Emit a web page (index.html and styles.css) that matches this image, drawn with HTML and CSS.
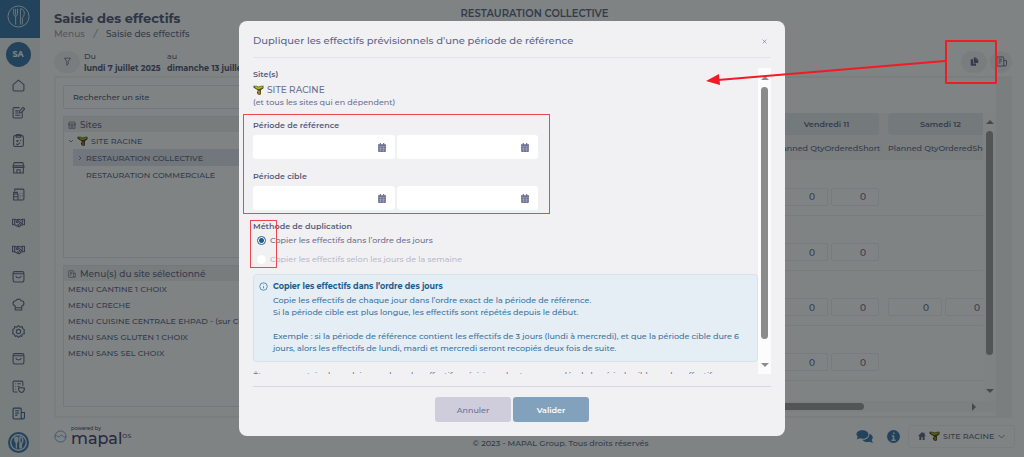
FILE: index.html
```html
<!DOCTYPE html>
<html lang="fr">
<head>
  <meta charset="UTF-8" />
  <meta name="viewport" content="width=device-width, initial-scale=1" />
  <title>Saisie des effectifs</title>
  <link rel="stylesheet" href="styles.css">
</head>
<body>

<!-- icons -->
<svg class="sprite" aria-hidden="true">
  <symbol id="i-cutlery" viewBox="0 0 24 24"><circle cx="12" cy="12" r="11"/><path d="M7 4v5c0 2 1 2.500 2 3v8.500M11 4v5c0 2-1 2.500-2 3M9 4v7M14 20.500V4c3 0 4 2 4 4.500S17 13 16 13v7.500"/></symbol>
  <symbol id="i-home" viewBox="0 0 24 24"><path d="M2 10.500 12 2l10 8.500V20a2 2 0 0 1-2 2H4a2 2 0 0 1-2-2z"/></symbol>
  <symbol id="i-edit" viewBox="0 0 24 24"><path d="M14 3H4a2 2 0 0 0-2 2v15a2 2 0 0 0 2 2h13a2 2 0 0 0 2-2v-8M6 9h6M6 13h5M6 17h9M13 13l1-4 6.500-6.500 3 3L17 12z"/></symbol>
  <symbol id="i-clip" viewBox="0 0 24 24"><rect x="3" y="3" width="18" height="20" rx="3"/><path d="M8 1h8v5H8zM8 12l2 2 2-3M15 12h2M8 18l2 2 5-4"/></symbol>
  <symbol id="i-store" viewBox="0 0 24 24"><path d="M4 3h16l2 6v3H2V9zM3 12v10h18V12M9 22v-6h6v6M2 9h20"/></symbol>
  <symbol id="i-vending" viewBox="0 0 24 24"><path d="M5 6V2h15a2 2 0 0 1 2 2v16a2 2 0 0 1-2 2H3V11h8v11M3 11V8h7v3M3 16h8M15 9v1M19 9v1M15 14v1M19 14v1M15 18v1M5 2v4"/></symbol>
  <symbol id="i-hands" viewBox="0 0 24 24"><path d="M1 6h4l3 1.500L12 6l4 1.500L19 6h4v10h-4l-6 4-3-1-5-3H1zM5 6v10M19 6v10M12 7l-4 4c1 2 3 1 5-1l6 5M10 15l3 3M13 13l3 4"/></symbol>
  <symbol id="i-bag" viewBox="0 0 24 24"><rect x="2" y="3" width="20" height="19" rx="3"/><path d="M2 7h20M7 11c1 5 9 5 10 0"/></symbol>
  <symbol id="i-chef" viewBox="0 0 24 24"><path d="M6 22v-7c-6-2-5-10 1-10 2-4 8-4 10 0 6 0 7 8 1 10v7zM6 18h12"/></symbol>
  <symbol id="i-gear" viewBox="0 0 24 24"><path d="m12 1 3 3 4-1 1 4 3 2-1 3 1 4-4 1-1 4-3-1-3 3-3-3-3 1-2-4-3-1 1-4-1-3 3-2 1-4 4 1z"/><circle cx="12" cy="12" r="4"/></symbol>
  <symbol id="i-shield" viewBox="0 0 24 24"><path d="M10 22H4a2 2 0 0 1-2-2V4a2 2 0 0 1 2-2h14a2 2 0 0 1 2 2v7M6 7h1M10 7h6M6 12h1M10 12h4M6 17h1M12 15l5-1 6 1c0 5-2 7-5 8-4-1-6-4-6-8z"/></symbol>
  <symbol id="i-news" viewBox="0 0 24 24"><path d="M17 22H4a2 2 0 0 1-2-2V4a2 2 0 0 1 2-2h11a2 2 0 0 1 2 2zM17 10h6v9c0 4-6 4-6 0M6 7h7M6 11h7M6 15h4"/></symbol>
  <symbol id="i-filter" viewBox="0 0 24 24"><path d="M4 3h16l-6 9v7l-4 3V12z"/></symbol>
  <symbol id="i-down" viewBox="0 0 24 24"><path d="m4 8 8 8 8-8"/></symbol>
  <symbol id="i-right" viewBox="0 0 24 24"><path d="m8 4 8 8-8 8"/></symbol>
  <symbol id="i-close" viewBox="0 0 24 24"><path d="m3 3 18 18M21 3 3 21"/></symbol>
  <symbol id="i-palm" viewBox="0 0 12 12"><path fill="#4a4a1e" d="M0 1h4l2 1 3-1h3v3l-3 2v5l-2 1-2-1-1-2 1-2V6L3 5 0 3z"/><path fill="#a9bd20" d="M1 1.500h3l2 1.500 3-1.500h2V3L8 4.500 6 5 3 4z"/><path fill="#c96f2e" d="M5 7h3v4H6z"/></symbol>
  <symbol id="i-cal" viewBox="0 0 14 16"><path d="M3 0h2v2h4V0h2v2h3v12a2 2 0 0 1-2 2H2a2 2 0 0 1-2-2V2h3z"/><path stroke="#fff" stroke-opacity=".4" stroke-width="1" d="M0 6h14M0 9.500h14M0 12.500h14M4.500 6v10M9.500 6v10"/></symbol>
  <symbol id="i-copy" viewBox="0 0 24 24"><path d="M2 6h6v11h8v6H2z"/><path d="M10 1h6l6 6v9H10z"/><path stroke="#ddd" stroke-width="1" d="M16 1v6h6" fill="none"/></symbol>
  <symbol id="i-chat" viewBox="0 0 24 18"><path d="M9 0c5 0 8.500 2.500 8.500 6S14 12 9 12l-3-.5L1 13l1.500-3.500C-2 5 2 0 9 0z"/><path d="M19 5c5 2 6 6 3 9l2 4-5-1.500c-4 1-8 0-10-3C15 14 19 10 19 5z"/></symbol>
</svg>

<div class="app">
  <nav class="sidebar">
    <a class="brand" href="#" aria-label="Accueil"><svg><use href="#i-cutlery"/></svg></a>
    <a class="avatar" href="#">SA</a>
    <div class="nav-icons">
      <a href="#" aria-label="Accueil"><svg><use href="#i-home"/></svg></a>
      <a href="#" aria-label="Saisie"><svg><use href="#i-edit"/></svg></a>
      <a href="#" aria-label="Contrôles"><svg><use href="#i-clip"/></svg></a>
      <a href="#" aria-label="Sites"><svg><use href="#i-store"/></svg></a>
      <a href="#" aria-label="Distribution"><svg><use href="#i-vending"/></svg></a>
      <a href="#" aria-label="Fournisseurs"><svg><use href="#i-hands"/></svg></a>
      <a href="#" aria-label="Clients"><svg><use href="#i-hands"/></svg></a>
      <a href="#" aria-label="Commandes"><svg><use href="#i-bag"/></svg></a>
      <a href="#" aria-label="Production"><svg><use href="#i-chef"/></svg></a>
      <a href="#" aria-label="Paramètres"><svg><use href="#i-gear"/></svg></a>
      <a href="#" aria-label="Achats"><svg><use href="#i-bag"/></svg></a>
      <a href="#" aria-label="Qualité"><svg><use href="#i-shield"/></svg></a>
      <a class="current" href="#" aria-label="Menus"><svg><use href="#i-news"/></svg></a>
    </div>
    <a class="app-round" href="#" aria-label="Restauration"><svg><use href="#i-cutlery"/></svg></a>
  </nav>

  <div class="page">
    <header class="top">
      <div class="heading">
        <h1>Saisie des effectifs</h1>
        <p class="crumbs"><a href="#">Menus</a><i>/</i><span>Saisie des effectifs</span></p>
      </div>
      <strong class="site-name">RESTAURATION COLLECTIVE</strong>
    </header>

    <div class="toolbar">
      <button class="pill" aria-label="Filtrer"><svg><use href="#i-filter"/></svg></button>
      <p class="date">Du<b>lundi 7 juillet 2025</b></p>
      <p class="date">au<b>dimanche 13 juillet 2025</b></p>
      <button class="pill copy" aria-label="Dupliquer"><svg><use href="#i-copy"/></svg></button>
      <button class="pill report" aria-label="Rapport"><svg><use href="#i-news"/></svg></button>
    </div>

    <main class="board">
      <div class="left">
        <input class="search" type="text" placeholder="Rechercher un site" aria-label="Rechercher un site">
        <section class="panel">
          <h2><svg><use href="#i-store"/></svg>Sites</h2>
          <ul class="tree">
            <li><svg class="chev"><use href="#i-down"/></svg><svg class="palm"><use href="#i-palm"/></svg>SITE RACINE</li>
            <li class="child selected"><svg class="chev"><use href="#i-right"/></svg>RESTAURATION COLLECTIVE</li>
            <li class="child leaf">RESTAURATION COMMERCIALE</li>
          </ul>
        </section>
        <section class="panel">
          <h2><svg><use href="#i-news"/></svg>Menu(s) du site sélectionné</h2>
          <ul class="menus">
            <li>MENU CANTINE 1 CHOIX</li>
            <li>MENU CRECHE</li>
            <li>MENU CUISINE CENTRALE EHPAD - (sur COMMANDE)</li>
            <li>MENU SANS GLUTEN 1 CHOIX</li>
            <li>MENU SANS SEL CHOIX</li>
          </ul>
        </section>
      </div>

      <div class="grid-pane">
        <div class="grid-row">
          <div class="grid-clip"><table id="grid"></table></div>
          <div class="vbar page-bar"><i class="up"></i><b></b><i class="down"></i></div>
        </div>
        <div class="hbar"><b></b><i></i></div>
      </div>
    </main>

    <footer class="foot">
      <div class="mapal">
        <svg class="wave" viewBox="0 0 14 14"><circle cx="7" cy="7" r="6"/><path d="M1 7c2-3 3 2 5 0s3-2 4 0 2 0 3 0"/></svg>
        <p><small>powered by</small><span>mapal<sup>OS</sup></span></p>
      </div>
      <p class="copyright">© 2023 - MAPAL Group. Tous droits réservés</p>
      <button class="foot-icon" aria-label="Discussion"><svg class="chat"><use href="#i-chat"/></svg></button>
      <button class="foot-icon info" aria-label="Informations"><svg viewBox="0 0 24 24"><circle cx="12" cy="12" r="12"/><path d="M9 11h3v8M8 19h8M11 6h3"/></svg></button>
      <button class="site-picker">
        <svg class="house" viewBox="0 0 12 12"><path d="M6 0 0 6h2v6h3V8h2v4h3V6h2L10 4V1H8v1z"/></svg>
        <svg class="palm"><use href="#i-palm"/></svg>SITE RACINE
        <svg class="chev"><use href="#i-down"/></svg>
      </button>
    </footer>
  </div>
</div>

<div class="backdrop">
  <div class="modal" role="dialog" aria-labelledby="modal-title">
    <header>
      <h2 id="modal-title">Dupliquer les effectifs prévisionnels d'une période de référence</h2>
      <button class="close" aria-label="Fermer"><svg><use href="#i-close"/></svg></button>
    </header>

    <div class="modal-body">
      <div class="scroll">
        <h3>Site(s)</h3>
        <p class="root"><svg class="palm"><use href="#i-palm"/></svg>SITE RACINE</p>
        <p>(et tous les sites qui en dépendent)</p>

        <div class="periods">
          <fieldset>
            <legend>Période de référence</legend>
            <div class="dates">
              <label><input type="text" aria-label="Début de référence"><svg><use href="#i-cal"/></svg></label>
              <label><input type="text" aria-label="Fin de référence"><svg><use href="#i-cal"/></svg></label>
            </div>
          </fieldset>
          <fieldset>
            <legend>Période cible</legend>
            <div class="dates">
              <label><input type="text" aria-label="Début cible"><svg><use href="#i-cal"/></svg></label>
              <label><input type="text" aria-label="Fin cible"><svg><use href="#i-cal"/></svg></label>
            </div>
          </fieldset>
          <span class="mark"></span>
        </div>

        <div class="method">
          <fieldset>
            <legend>Méthode de duplication</legend>
            <label><input type="radio" name="methode" checked>Copier les effectifs dans l’ordre des jours</label>
            <label class="off"><input type="radio" name="methode" disabled>Copier les effectifs selon les jours de la semaine</label>
          </fieldset>
          <span class="mark"></span>
        </div>

        <div class="notice">
          <svg viewBox="0 0 24 24"><circle cx="12" cy="12" r="10"/><path d="M12 11v6M12 7v1"/></svg>
          <div>
            <h4>Copier les effectifs dans l’ordre des jours</h4>
            <p>Copie les effectifs de chaque jour dans l’ordre exact de la période de référence.<br>
            Si la période cible est plus longue, les effectifs sont répétés depuis le début.</p>
            <p class="example">Exemple : si la période de référence contient les effectifs de 3 jours (lundi à mercredi), et que la période cible dure 6 jours, alors les effectifs de lundi, mardi et mercredi seront recopiés deux fois de suite.</p>
          </div>
        </div>

        <p class="confirm">Êtes-vous certain de vouloir remplacer les effectifs prévisionnels et commandés de la période cible par les effectifs</p>
      </div>
      <div class="vbar"><i class="up"></i><b></b><i class="down"></i></div>
    </div>

    <div class="actions">
      <button class="cancel">Annuler</button>
      <button class="ok">Valider</button>
    </div>
  </div>
</div>

<svg class="arrow" viewBox="0 0 292 46" aria-hidden="true">
  <rect x="240" y="2" width="50" height="42"/>
  <path d="M239 22 12 41"/>
  <path class="tip" d="M0 42 13 35 14 46z"/>
</svg>

<script>
  const days = ["Lundi 7", "Mardi 8", "Mercredi 9", "Jeudi 10", "Vendredi 11", "Samedi 12"];
  // days with a menu, one entry per line
  const filled = [5, 5, 6, 5];

  let html = "<thead><tr>";
  days.forEach(d => html += `<th colspan="2"><span class="day">${d}</span></th>`);
  html += "</tr><tr>";
  days.forEach(() => html += `<th colspan="2" class="sub"><span>Planned Qty</span><span>Ordered</span><span>Short</span></th>`);
  html += "</tr></thead><tbody>";
  filled.forEach(n => {
    html += "<tr>";
    days.forEach((d, i) => {
      const cell = i < n ? `<input type="text" value="0" aria-label="${d}">` : "";
      html += `<td>${cell}</td><td>${cell}</td>`;
    });
    html += "</tr>";
  });
  document.getElementById("grid").innerHTML = html + "</tbody>";
</script>

</body>
</html>
```
FILE: styles.css
```css
:root {
  --text: #6a6f91;
  --strong: #5d6385;
  --blue: #1d5d8e;
  --brand: #447eae;
  --line: #e6e8ee;
  --red: #ee1c24;
}
* {
  box-sizing: border-box;
}
body {
  margin: 0;
  font: 500 8px/12px Montserrat, Inter, sans-serif;
  color: var(--text);
  background: #fff;
}
h1, h2, h3, h4, p, ul, fieldset {
  margin: 0;
  padding: 0;
  border: 0;
  list-style: none;
}
a {
  color: inherit;
  text-decoration: none;
}
button, input {
  font: inherit;
  color: inherit;
  margin: 0;
  padding: 0;
  border: 0;
  background: none;
}
svg {
  fill: none;
  stroke: currentColor;
  stroke-width: 2;
  stroke-linejoin: round;
  flex: none;
}
.sprite {
  position: absolute;
  width: 0;
  height: 0;
}
.palm {
  width: 11px;
  height: 10px;
  stroke: none;
}
.chev {
  width: 6px;
  height: 6px;
  stroke-width: 3;
}

.app {
  display: flex;
  min-height: 100vh;
}
.sidebar {
  width: 40px;
  display: flex;
  flex-direction: column;
  align-items: center;
  padding-right: 4px;
  padding-bottom: 4px;
  background: #f0f2f2;
}
.brand {
  width: 40px;
  height: 38px;
  margin-right: -4px;
  padding: 5px 7px;
  background: var(--brand);
  color: #dfe8ee;
}
.brand svg {
  width: 23px;
  height: 23px;
  stroke-width: 1;
}
.avatar {
  width: 25px;
  height: 25px;
  margin-top: 4px;
  border-radius: 50%;
  background: var(--brand);
  color: #fff;
  font-weight: 700;
  line-height: 25px;
  text-align: center;
}
.nav-icons {
  flex: 1;
  display: flex;
  flex-direction: column;
  justify-content: space-between;
  padding: 12px 0;
}
.nav-icons a, .nav-icons svg {
  display: block;
  width: 13px;
  height: 13px;
}
.nav-icons .current {
  color: #466996;
}
.app-round {
  width: 21px;
  height: 21px;
  padding: 2px;
  border-radius: 50%;
  background: var(--brand);
  color: #dfe8ee;
}
.app-round svg {
  display: block;
  width: 17px;
  height: 17px;
}

.page {
  flex: 1;
  min-width: 0;
  display: flex;
  flex-direction: column;
  padding: 8px 9px 8px 14px;
}
.top {
  display: grid;
  grid-template-columns: 1fr auto 1fr;
  height: 42px;
}
h1 {
  font-size: 13px;
  line-height: 20px;
  font-weight: 700;
  color: var(--strong);
}
.crumbs {
  display: flex;
  gap: 9px;
  font-size: 9px;
}
.crumbs a, .crumbs i {
  color: #a5a8ba;
}
.site-name {
  font-size: 10px;
  font-weight: 600;
}
.toolbar {
  display: flex;
  align-items: center;
  height: 23px;
}
.pill {
  display: flex;
  align-items: center;
  justify-content: center;
  width: 26px;
  height: 22px;
  border-radius: 11px;
  background: #f3f3f3;
}
.pill svg {
  width: 9px;
  height: 9px;
}
.date {
  width: 83px;
  margin-left: 4px;
  white-space: nowrap;
}
.date + .date {
  width: auto;
  margin-left: 0;
}
.date b {
  display: block;
  font-weight: 700;
  color: var(--strong);
}
.copy {
  margin-left: auto;
}
.copy svg {
  fill: currentColor;
  stroke: none;
}
.report {
  width: 22px;
  margin: 0 3px;
}
.report svg {
  width: 11px;
  height: 11px;
}

.board {
  display: flex;
  gap: 12px;
  margin-right: 3px;
  margin-top: 3px;
  padding: 7px 14px 4px 7px;
  border: 2px solid #f5f5f5;
  background: linear-gradient(to left, #f5f5f5 14px, #fff 14px);
}
.left {
  width: 243px;
  flex: none;
}
.search {
  display: block;
  width: 100%;
  height: 24px;
  padding: 0 9px;
  border: 1px solid var(--line);
  border-radius: 2px;
}
.search::placeholder {
  color: var(--strong);
  opacity: 1;
}
.panel {
  height: 142px;
  margin-top: 7px;
  border: 1px solid var(--line);
  overflow: hidden;
  white-space: nowrap;
}
.panel h2 {
  display: flex;
  align-items: center;
  gap: 4px;
  height: 15px;
  padding: 0 4px;
  font-size: 9px;
  font-weight: 500;
  background: #f1f1f3;
}
.panel h2 svg {
  width: 8px;
  height: 8px;
}
.tree li {
  display: flex;
  align-items: center;
  gap: 3px;
  height: 17px;
  padding-left: 4px;
}
.tree .child {
  margin-left: 9px;
}
.tree .selected {
  background: #e3e6f0;
}
.tree .leaf {
  padding-left: 13px;
}
.menus li {
  height: 16px;
  padding-left: 4px;
  line-height: 16px;
}

.grid-pane {
  flex: 1;
  min-width: 0;
}
.grid-row {
  display: flex;
  height: 316px;
}
.grid-clip {
  flex: 1;
  overflow: hidden;
  padding-top: 28px;
}
table {
  width: 684px;
  table-layout: fixed;
  border-collapse: collapse;
}
th {
  padding: 0 9px 0 0;
  background: #f6f6f8;
  font-weight: 500;
}
th.sub {
  height: 25px;
  text-align: left;
  white-space: nowrap;
}
.day {
  display: block;
  height: 22px;
  border-radius: 4px;
  line-height: 22px;
  font-weight: 600;
  background: #e8eaf0;
}
td {
  height: 55px;
  padding: 0 3px 0 0;
  border-bottom: 1px solid #eff0f2;
}
td:nth-child(even) {
  padding-right: 9px;
}
td input {
  display: block;
  width: 100%;
  height: 18px;
  margin-top: 19px;
  padding-right: 12px;
  border: 1px solid #eeeff2;
  border-radius: 2px;
  font-size: 9px;
  text-align: right;
}

.vbar {
  width: 13px;
  display: flex;
  flex-direction: column;
  align-items: center;
  padding: 8px 0 7px;
  background: #fcfcfc;
}
.vbar b {
  flex: 1;
  width: 7px;
  margin: 7px 0 24px;
  border-radius: 4px;
  background: #8b8b8b;
}
.vbar i {
  border: 4px solid transparent;
}
.vbar .up {
  border-top: 0;
  border-bottom-color: #8b8b8b;
}
.vbar .down {
  border-bottom: 0;
  border-top-color: #8b8b8b;
}
.page-bar {
  margin-top: 27px;
  padding-bottom: 8px;
}
.page-bar b {
  margin-bottom: 34px;
}
.hbar {
  display: flex;
  align-items: center;
  justify-content: space-between;
  height: 11px;
  padding-right: 20px;
  background: #f9f9f9;
}
.hbar b {
  width: 83%;
  height: 7px;
  border-radius: 4px;
  background: #8b8b8b;
}
.hbar i {
  border: 4px solid transparent;
  border-left-color: #8b8b8b;
  border-right: 0;
}
.page-bar b, .hbar b {
  background: #a2a2a2;
}

.foot {
  display: flex;
  align-items: center;
  margin-top: auto;
}
.mapal {
  display: flex;
  align-items: center;
  gap: 4px;
  width: 211px;
  color: #524a78;
}
.wave {
  width: 13px;
  height: 13px;
  stroke: #78a8ca;
  stroke-width: 1;
}
.mapal small, .mapal span {
  display: block;
  font-size: 5px;
  line-height: 6px;
}
.mapal span {
  font-size: 16px;
  line-height: 16px;
}
.mapal sup {
  font-size: 6px;
  line-height: 6px;
}
.copyright {
  flex: 1;
  padding-top: 14px;
  text-align: center;
}
.foot-icon {
  display: block;
  width: 17px;
  height: 13px;
  color: var(--brand);
}
.chat {
  display: block;
  width: 17px;
  height: 13px;
  fill: currentColor;
  stroke: none;
}
.info {
  width: 13px;
  margin: 0 8px 0 14px;
}
.info svg {
  display: block;
  width: 13px;
  height: 13px;
  stroke: #dfe8ee;
  stroke-width: 3;
}
.info circle {
  fill: var(--brand);
  stroke: none;
}
.site-picker {
  display: flex;
  align-items: center;
  gap: 3px;
  width: 107px;
  height: 23px;
  padding: 0 9px;
  border: 1px solid #f3f3f5;
  border-radius: 3px;
  white-space: nowrap;
}
.site-picker .chev {
  width: 9px;
  height: 9px;
  margin-left: auto;
  stroke-width: 2;
}
.house {
  width: 8px;
  height: 8px;
  fill: currentColor;
  stroke: none;
}

.backdrop {
  position: fixed;
  inset: 0;
  display: flex;
  justify-content: center;
  align-items: flex-start;
  padding-top: 21px;
  background: rgba(0, 8, 8, 0.5);
}
.modal {
  width: 546px;
  padding: 0 14px 14px;
  border-radius: 8px;
  background: #f1f1f4;
}
.modal header {
  display: flex;
  align-items: center;
  justify-content: space-between;
  height: 37px;
  padding: 4px 4px 0 0;
  border-bottom: 1px solid #e4e4e8;
}
.modal h2 {
  font-size: 10px;
  font-weight: 500;
  color: #5f6489;
}
.close svg {
  display: block;
  width: 5px;
  height: 5px;
  stroke-width: 3;
}
.modal-body {
  display: flex;
  max-height: 306px;
  margin: 10px 0 12px;
}
.scroll {
  flex: 1;
  overflow: hidden;
  margin-left: -14px;
  padding-left: 14px;
}
.modal h3, legend {
  padding: 0;
  font-size: 8px;
  font-weight: 600;
  color: #565b7c;
}
.root {
  display: flex;
  align-items: center;
  gap: 3px;
  margin-top: 4px;
  font-size: 9px;
}
.periods, .method {
  position: relative;
}
.periods fieldset {
  margin-top: 11px;
}
.dates {
  display: flex;
  gap: 2px;
  width: 285px;
  margin-top: 4px;
}
.dates label {
  flex: 1;
  min-width: 0;
  display: flex;
  align-items: center;
  height: 24px;
  padding-right: 9px;
  border-radius: 3px;
  background: #fff;
}
.dates input {
  flex: 1;
  min-width: 0;
}
.dates svg {
  width: 8px;
  height: 9px;
  fill: currentColor;
  stroke: none;
}
/* the highlights drawn round the fields */
.mark {
  position: absolute;
  border: 1px solid #f2444b;
}
.periods .mark {
  inset: -5px auto -4px -10px;
  width: 307px;
}
.method {
  margin-top: 10px;
}
.method label {
  display: flex;
  align-items: center;
  gap: 4px;
  margin-top: 7px;
  padding-left: 4px;
}
.method legend + label {
  margin-top: 2px;
}
.method .off {
  color: #b7b9cb;
}
.method input {
  appearance: none;
  width: 9px;
  height: 9px;
  border: 1px solid #fff;
  border-radius: 50%;
  background: #fff;
}
.method input:checked {
  border-color: var(--blue);
  background: radial-gradient(var(--blue) 2px, #fff 3px);
}
.method .mark {
  inset: 0 auto -3px -3px;
  width: 27px;
}
.notice {
  display: flex;
  gap: 5px;
  margin-top: 9px;
  padding: 5px 5px 7px;
  border: 1px solid #d3e3f0;
  border-radius: 4px;
  background: #e5edf5;
  color: #3873a0;
}
.notice svg {
  width: 9px;
  height: 9px;
  margin-top: 2px;
}
.notice h4 {
  font-weight: 700;
  color: var(--blue);
  margin-bottom: 2px;
}
.example {
  margin-top: 12px;
}
.confirm {
  margin-top: 7px;
  white-space: nowrap;
}
.actions {
  display: flex;
  justify-content: center;
  gap: 2px;
  padding-top: 10px;
  border-top: 1px solid #d7d8e4;
}
.actions button {
  width: 76px;
  height: 25px;
  border-radius: 3px;
}
.actions .cancel {
  background: #cfcddc;
}
.actions .ok {
  background: #82a1bd;
  color: #fff;
  font-weight: 600;
}

.arrow {
  position: absolute;
  top: 39px;
  right: 26px;
  width: 292px;
  height: 46px;
  stroke: var(--red);
}
.arrow .tip {
  fill: var(--red);
  stroke: none;
}
```
